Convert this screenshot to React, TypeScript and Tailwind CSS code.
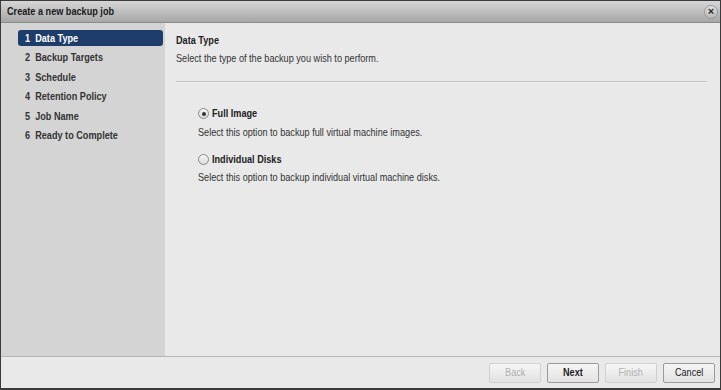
import React from 'react';

const steps = ['Data Type', 'Backup Targets', 'Schedule', 'Retention Policy', 'Job Name', 'Ready to Complete'];

// the reference uses a narrow face; squeeze Liberation Sans to match
const N = ({ children, center }: { children: React.ReactNode; center?: boolean }) => (
  <span className={`inline-block whitespace-nowrap scale-x-[0.83] ${center ? 'origin-center' : 'origin-left'}`}>{children}</span>
);

const Radio = ({ checked }: { checked: boolean }) => (
  <span className="w-[11px] h-[11px] rounded-full border border-[#8a8a8a] bg-gradient-to-b from-[#f4f4f4] to-[#dcdcdc] flex items-center justify-center shrink-0">
    {checked && <span className="w-[4px] h-[4px] rounded-full bg-[#333]" />}
  </span>
);

const Btn = ({ label, disabled, bold }: { label: string; disabled?: boolean; bold?: boolean }) => (
  <button
    className={`w-[52px] h-[20px] rounded-[2px] border text-[11px] leading-none bg-gradient-to-b from-[#f6f6f6] to-[#e2e2e2] ${
      disabled ? 'border-[#cfcfcf] text-[#b0b0b0]' : 'border-[#9a9a9a] text-[#222]'
    } ${bold ? 'font-bold' : ''}`}
  >
    <N center>{label}</N>
  </button>
);

export default function App() {
  return (
    <div className="w-[721px] h-[390px] bg-[#3a3a3a] p-[1px] pb-[2px] font-['Liberation_Sans',Arial,sans-serif] text-[11px] leading-[13px] text-[#333]">
      <div className="w-full h-full flex flex-col bg-[#e9e9e9]">
        {/* Title bar */}
        <div className="h-[22px] shrink-0 flex items-center justify-between pl-[6px] pr-[2px] bg-gradient-to-b from-[#d6d6d6] to-[#a7a7a7] border-b border-[#8c8c8c]">
          <span className="font-bold text-[11px] text-[#1a1a1a]">
            <N>Create a new backup job</N>
          </span>
          <span className="w-[14px] h-[14px] rounded-full bg-gradient-to-b from-[#e0e0e0] to-[#b8b8b8] border border-[#9a9a9a] flex items-center justify-center text-[11px] font-bold leading-none text-[#2a2a2a]">
            ×
          </span>
        </div>

        <div className="flex flex-1 min-h-0">
          {/* Steps */}
          <div className="w-[164px] shrink-0 bg-[#d4d4d4] pt-[7px] pl-[17px] pr-[2px]">
            {steps.map((s, i) => (
              <div
                key={s}
                className={`h-[16px] mb-[3.5px] flex items-center pl-[7px] font-bold rounded-[3px] ${
                  i === 0 ? 'bg-[#1e3d6b] text-white' : 'text-[#333]'
                }`}
              >
                <N>
                  {i + 1}&nbsp; {s}
                </N>
              </div>
            ))}
          </div>

          {/* Content */}
          <div className="flex-1 pl-[11px] pr-[13px] pt-[11px]">
            <div className="font-bold text-[#222]">
              <N>Data Type</N>
            </div>
            <div className="mt-[5px] text-[#333]">
              <N>Select the type of the backup you wish to perform.</N>
            </div>
            <div className="mt-[16px] h-[2px] border-t border-[#c2c2c2] bg-[#f2f2f2]" />

            <div className="pl-[22px] pt-[24px]">
              <div className="flex items-center gap-[3px] font-bold text-[#222]">
                <Radio checked />
                <N>Full Image</N>
              </div>
              <div className="mt-[6px]">
                <N>Select this option to backup full virtual machine images.</N>
              </div>

              <div className="mt-[14px] flex items-center gap-[3px] font-bold text-[#222]">
                <Radio checked={false} />
                <N>Individual Disks</N>
              </div>
              <div className="mt-[5px]">
                <N>Select this option to backup individual virtual machine disks.</N>
              </div>
            </div>
          </div>
        </div>

        {/* Footer */}
        <div className="h-[32px] shrink-0 border-t border-[#b5b5b5] flex items-center justify-end gap-[6px] pr-[5px]">
          <Btn label="Back" disabled />
          <Btn label="Next" bold />
          <Btn label="Finish" disabled />
          <Btn label="Cancel" />
        </div>
      </div>
    </div>
  );
}
